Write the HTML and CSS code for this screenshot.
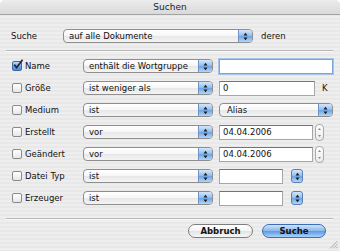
FILE: index.html
```html
<!DOCTYPE html>
<html>
<head>
  <meta charset="UTF-8">
  <title>Suchen</title>
  <link rel="stylesheet" href="styles.css">
</head>
<body>
  <div class="window">
    <div class="titlebar">Suchen</div>

    <div class="scope">
      <span class="scope-label">Suche</span>
      <div class="popup popup-scope">
        <span class="popup-text">auf alle Dokumente</span>
        <span class="popup-arrows"><svg width="5" height="9" viewBox="0 0 5 9"><path d="M0.5 3.5 L2.5 0.8 L4.5 3.5 Z M0.5 5.5 L2.5 8.2 L4.5 5.5 Z" fill="#1a1a1a"/></svg></span>
      </div>
      <span class="scope-tail">deren</span>
    </div>

    <div class="sep"></div>

    <div class="criteria">
      <label class="crit"><span class="check checked"><svg width="12" height="12" viewBox="0 0 12 12"><path d="M2.2 5.6 L4.6 8.6 L10.6 0.8" fill="none" stroke="#1b2a44" stroke-width="1.7"/></svg></span>Name</label>
      <div class="popup">
        <span class="popup-text">enthält die Wortgruppe</span>
        <span class="popup-arrows"><svg width="5" height="9" viewBox="0 0 5 9"><path d="M0.5 3.5 L2.5 0.8 L4.5 3.5 Z M0.5 5.5 L2.5 8.2 L4.5 5.5 Z" fill="#1a1a1a"/></svg></span>
      </div>
      <div class="value"><span class="field field-focus w-name"></span></div>

      <label class="crit"><span class="check"></span>Größe</label>
      <div class="popup">
        <span class="popup-text">ist weniger als</span>
        <span class="popup-arrows"><svg width="5" height="9" viewBox="0 0 5 9"><path d="M0.5 3.5 L2.5 0.8 L4.5 3.5 Z M0.5 5.5 L2.5 8.2 L4.5 5.5 Z" fill="#1a1a1a"/></svg></span>
      </div>
      <div class="value"><span class="field w-size">0</span><span class="unit">K</span></div>

      <label class="crit"><span class="check"></span>Medium</label>
      <div class="popup">
        <span class="popup-text">ist</span>
        <span class="popup-arrows"><svg width="5" height="9" viewBox="0 0 5 9"><path d="M0.5 3.5 L2.5 0.8 L4.5 3.5 Z M0.5 5.5 L2.5 8.2 L4.5 5.5 Z" fill="#1a1a1a"/></svg></span>
      </div>
      <div class="value">
        <div class="popup popup-medium">
          <span class="popup-text">Alias</span>
          <span class="popup-arrows"><svg width="5" height="9" viewBox="0 0 5 9"><path d="M0.5 3.5 L2.5 0.8 L4.5 3.5 Z M0.5 5.5 L2.5 8.2 L4.5 5.5 Z" fill="#1a1a1a"/></svg></span>
        </div>
      </div>

      <label class="crit"><span class="check"></span>Erstellt</label>
      <div class="popup">
        <span class="popup-text">vor</span>
        <span class="popup-arrows"><svg width="5" height="9" viewBox="0 0 5 9"><path d="M0.5 3.5 L2.5 0.8 L4.5 3.5 Z M0.5 5.5 L2.5 8.2 L4.5 5.5 Z" fill="#1a1a1a"/></svg></span>
      </div>
      <div class="value">
        <span class="field w-date">04.04.2006</span>
        <span class="stepper"><svg width="5" height="13" viewBox="0 0 5 13"><path d="M1 4 L2.5 2 L4 4 Z M1 9 L2.5 11 L4 9 Z" fill="#8a8a8a"/></svg></span>
      </div>

      <label class="crit"><span class="check"></span>Geändert</label>
      <div class="popup">
        <span class="popup-text">vor</span>
        <span class="popup-arrows"><svg width="5" height="9" viewBox="0 0 5 9"><path d="M0.5 3.5 L2.5 0.8 L4.5 3.5 Z M0.5 5.5 L2.5 8.2 L4.5 5.5 Z" fill="#1a1a1a"/></svg></span>
      </div>
      <div class="value">
        <span class="field w-date">04.04.2006</span>
        <span class="stepper"><svg width="5" height="13" viewBox="0 0 5 13"><path d="M1 4 L2.5 2 L4 4 Z M1 9 L2.5 11 L4 9 Z" fill="#8a8a8a"/></svg></span>
      </div>

      <label class="crit"><span class="check"></span>Datei Typ</label>
      <div class="popup">
        <span class="popup-text">ist</span>
        <span class="popup-arrows"><svg width="5" height="9" viewBox="0 0 5 9"><path d="M0.5 3.5 L2.5 0.8 L4.5 3.5 Z M0.5 5.5 L2.5 8.2 L4.5 5.5 Z" fill="#1a1a1a"/></svg></span>
      </div>
      <div class="value">
        <span class="field w-type"></span>
        <span class="mini-popup"><svg width="5" height="9" viewBox="0 0 5 9"><path d="M0.5 3.5 L2.5 0.8 L4.5 3.5 Z M0.5 5.5 L2.5 8.2 L4.5 5.5 Z" fill="#1a1a1a"/></svg></span>
      </div>

      <label class="crit"><span class="check"></span>Erzeuger</label>
      <div class="popup">
        <span class="popup-text">ist</span>
        <span class="popup-arrows"><svg width="5" height="9" viewBox="0 0 5 9"><path d="M0.5 3.5 L2.5 0.8 L4.5 3.5 Z M0.5 5.5 L2.5 8.2 L4.5 5.5 Z" fill="#1a1a1a"/></svg></span>
      </div>
      <div class="value">
        <span class="field w-type"></span>
        <span class="mini-popup"><svg width="5" height="9" viewBox="0 0 5 9"><path d="M0.5 3.5 L2.5 0.8 L4.5 3.5 Z M0.5 5.5 L2.5 8.2 L4.5 5.5 Z" fill="#1a1a1a"/></svg></span>
      </div>
    </div>

    <div class="sep sep-bottom"></div>

    <div class="buttons">
      <button class="btn">Abbruch</button>
      <button class="btn btn-default">Suche</button>
    </div>

    <svg class="grip" width="9" height="9" viewBox="0 0 9 9">
      <path d="M8.5 1 L1 8.5 M8.5 4 L4 8.5 M8.5 7 L7 8.5" stroke="#9a9a9a" stroke-width="0.8"/>
    </svg>
  </div>
</body>
</html>
```

FILE: styles.css
```css
body {
  margin: 0;
  background: #fff;
  font-family: "DejaVu Sans", sans-serif;
  font-size: 8.5px;
  color: #111;
}

.window {
  position: relative;
  width: 340px;
  height: 251px;
  overflow: hidden;
  border-radius: 5px 5px 0 0;
  background: repeating-linear-gradient(#eeeeee 0 2px, #e8e8e8 2px 4px);
}

.titlebar {
  height: 14px;
  line-height: 14px;
  text-align: center;
  font-size: 9px;
  color: #222;
  background: linear-gradient(#ececec, #d9d9d9);
  border-bottom: 1px solid #a3a3a3;
}

.scope {
  display: flex;
  align-items: center;
  height: 14px;
  margin-top: 14px;
  padding-left: 11px;
}

.scope-label {
  width: 52px;
}

.scope-tail {
  margin-left: 8px;
}

.sep {
  height: 1px;
  margin: 7px 7px 0 6px;
  background: #b8b8b8;
  box-shadow: 0 1px 0 #f8f8f8;
}

.sep-bottom {
  margin-top: 9px;
}

/* pop-up menus */
.popup {
  display: flex;
  box-sizing: border-box;
  height: 14px;
  border: 1px solid #8e8e8e;
  border-radius: 4px;
  overflow: hidden;
  background: linear-gradient(#ffffff, #f6f6f6 50%, #e7e7e7 51%, #f4f4f4);
}

.popup-scope {
  width: 190px;
}

.popup-medium {
  width: 114px;
}

.popup-text {
  flex: 1;
  padding-left: 5px;
  line-height: 12px;
  white-space: nowrap;
}

.popup-medium .popup-text {
  padding-left: 7px;
}

.popup-arrows,
.mini-popup {
  display: flex;
  align-items: center;
  justify-content: center;
  width: 13px;
  background: linear-gradient(#d6e7fa, #8ebaed 50%, #6aa2e4 51%, #b2d6f7);
  border-left: 1px solid #6f93c4;
}

.mini-popup {
  box-sizing: border-box;
  width: 12px;
  height: 14px;
  margin-left: 8px;
  border: 1px solid #5b7fb4;
  border-radius: 3px;
}

/* criteria rows */
.criteria {
  display: grid;
  grid-template-columns: 65px 130px 1fr;
  grid-auto-rows: 22px;
  column-gap: 6px;
  align-items: center;
  margin-top: 4px;
  padding-left: 12px;
}

.crit {
  display: flex;
  align-items: center;
  gap: 3px;
}

.check {
  position: relative;
  box-sizing: border-box;
  width: 10px;
  height: 10px;
  border: 1px solid #8a8a8a;
  border-radius: 2px;
  background: linear-gradient(#ffffff, #e6e6e6);
}

.check.checked {
  border-color: #3f68a6;
  background: linear-gradient(#c4dcf6, #6fa3e3 55%, #4f8ad8);
}

.check svg {
  position: absolute;
  left: -1px;
  top: -3px;
}

.value {
  display: flex;
  align-items: center;
}

.field {
  box-sizing: border-box;
  height: 15px;
  line-height: 13px;
  padding-left: 3px;
  background: #fff;
  border: 1px solid #a6a6a6;
  border-top-color: #747474;
}

.field-focus {
  border-color: #7aa3d8;
  box-shadow: 0 0 0 1px #a8c6ec;
}

.w-name { width: 114px; }
.w-size { width: 96px; }
.w-date { width: 94px; }
.w-type { width: 64px; }

.unit {
  margin-left: 7px;
}

.stepper {
  display: flex;
  align-items: center;
  justify-content: center;
  box-sizing: border-box;
  width: 9px;
  height: 17px;
  margin-left: 2px;
  border: 1px solid #a9a9a9;
  border-radius: 4px;
  background: linear-gradient(#ffffff, #ebebeb);
}

/* buttons */
.buttons {
  display: flex;
  justify-content: flex-end;
  gap: 9px;
  margin-top: 5px;
  padding-right: 14px;
}

.btn {
  box-sizing: border-box;
  width: 65px;
  height: 14px;
  padding: 0;
  font-family: "DejaVu Sans", sans-serif;
  font-size: 8.5px;
  font-weight: bold;
  color: #111;
  border: 1px solid #7e7e7e;
  border-radius: 7px;
  background: linear-gradient(#ffffff, #f3f3f3 50%, #e3e3e3 51%, #f6f6f6);
}

.btn-default {
  width: 64px;
  border-color: #3f6db5;
  background: linear-gradient(#cfe3fa, #88b6ec 50%, #5d98e2 51%, #a8d2f8);
}

.grip {
  position: absolute;
  right: 2px;
  bottom: 2px;
}
```
